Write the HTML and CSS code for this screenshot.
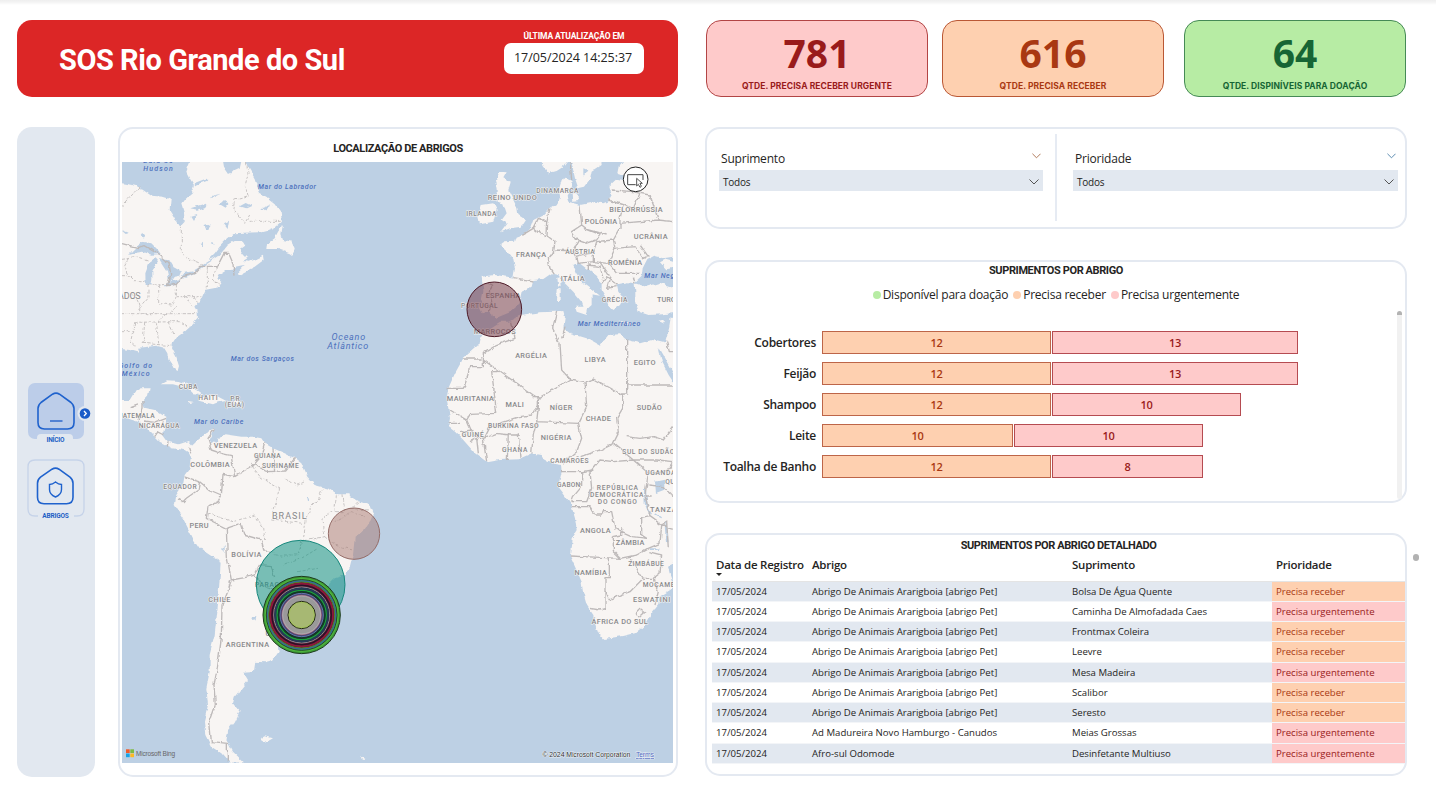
FILE: index.html
```html
<!DOCTYPE html>
<html lang="pt-BR">
<head>
<meta charset="utf-8">
<title>SOS Rio Grande do Sul</title>
<link rel="stylesheet" href="styles.css">
</head>
<body>
<div class="page">
  <header class="top">
    <div class="banner">
      <h1>SOS Rio Grande do Sul</h1>
      <div class="updated"><span class="updated-label">ÚLTIMA ATUALIZAÇÃO EM</span><span class="updated-value">17/05/2024 14:25:37</span></div>
    </div>
    <div class="kpi red"><b>781</b><span>QTDE. PRECISA RECEBER URGENTE</span></div>
    <div class="kpi orange"><b>616</b><span>QTDE. PRECISA RECEBER</span></div>
    <div class="kpi green"><b>64</b><span>QTDE. DISPINÍVEIS PARA DOAÇÃO</span></div>
  </header>
  <main class="main">
    <nav class="side">
      <svg class="nav" viewBox="0 0 78 150" width="78" height="150" fill="none">
        <rect x="11" y="6" width="56" height="56" rx="7" fill="#bccde9"/>
        <path d="M20 66v-5q0-4 4-4h28q4 0 4 4v5z" fill="#e2e8f0"/>
        <path d="M35.500 17.200q3.500-2.200 7 0l11.500 8.300q3 2.500 3 6v14q0 6.500-6.500 6.500h-23q-6.500 0-6.500-6.500v-14q0-3.500 3-6z" stroke="#1f62cd" stroke-width="1.600"/>
        <path d="M33 44h12.500" stroke="#3f74cf" stroke-width="1.700"/>
        <circle cx="68" cy="36.500" r="7.500" fill="#e2e8f0"/><circle cx="68" cy="36.500" r="5.300" fill="#1b5cc8"/>
        <path d="m67 34 2.300 2.500L67 39" stroke="#fff" stroke-width="1.300"/>
        <text x="38.500" y="64.500" textLength="18">INÍCIO</text>
        <path d="M21 139h-3q-7 0-7-7V90q0-7 7-7h42q7 0 7 7v42q0 7-7 7h-3" stroke="#c6d3e9" stroke-width="1.300"/>
        <path d="M35 92.200q3.500-2.200 7 0l11 8q3 2.500 3 6v14q0 6.500-6.500 6.500h-22.500q-6.500 0-6.500-6.500v-14q0-3.500 3-6z" stroke="#1f62cd" stroke-width="1.600"/>
        <path d="M38.500 105q3 2.500 6 2.500v5q0 5-6 7.500-6-2.500-6-7.500v-5q3 0 6-2.500z" stroke="#1f62cd" stroke-width="1.400"/>
        <text x="38.500" y="141" textLength="26.500">ABRIGOS</text>
      </svg>
    </nav>
    <section class="card map-card">
      <h2>LOCALIZAÇÃO DE ABRIGOS</h2>
      <svg class="map" viewBox="122 162 551 601" width="551" height="601">
        <defs><filter id="coast" x="0" y="0" width="1" height="1"><feTurbulence type="fractalNoise" baseFrequency=".13" numOctaves="3" seed="8"/><feDisplacementMap in="SourceGraphic" scale="4.500" xChannelSelector="R" yChannelSelector="G"/></filter></defs>
        <rect x="122" y="162" width="551" height="601" fill="#bdd0e4"/>
        <g filter="url(#coast)"><rect x="100" y="140" width="600" height="650" fill="#bdd0e4"/>
        <!-- Americas -->
        <g transform="translate(118 125) scale(.33333)">
          <g class="land">
            <path d="M-20 170 12 175 55 182 75 195 100 212 135 215 158 222 155 255 168 275 180 300 188 303 200 290 198 265 190 238 205 220 222 205 228 180 215 160 205 140 215 115 225 80 310 80 318 125 335 150 350 135 365 128 376 80 392 130 410 160 418 185 425 205 445 215 470 235 488 260 492 290 475 305 445 318 430 322 375 323 350 325 330 340 305 365 290 385 272 403 305 390 330 360 350 348 375 348 382 360 365 372 378 390 388 400 375 408 395 410 420 400 435 392 437 405 410 425 380 440 362 450 360 440 380 420 355 425 340 435 325 435 305 448 298 460 310 475 305 487 290 490 262 495 255 510 248 525 232 545 238 555 240 580 225 598 200 620 178 635 165 655 162 670 175 695 183 720 178 738 168 730 152 705 148 685 138 668 115 662 90 665 60 668 65 680 35 672-20 665z"/>
            <path d="m495 300-15 20-10 20-20 15-2 17 32 0 35 13 10 7 5-22-10-20-25-5-5-15z"/>
            <path d="M-20 825H35L50 800 65 790H95L90 812 72 830 80 848 110 855 142 875 140 905 135 930 150 950 180 958 210 948 225 965 222 990 200 975 165 970 125 950 85 910 60 890 12 875-20 860z"/>
            <path d="m128 778 22-12 35 2 30 12 30 20 10 8-30-3-15-15-45-12zM240 822l22-12 33 2 30 16-25 4-15 6-40-10zM345 828h25v6h-25zM205 830l23 4-12 3z"/>
            <path d="M210 985 222 962 240 945 265 925 290 912 285 925 275 945 280 955 300 940 320 928 370 935 405 935 430 940 440 955 465 970 500 985 530 1000 550 1015 568 1055 590 1080 635 1092 660 1108 690 1108 725 1130 755 1140 765 1165 755 1190 735 1220 710 1240 708 1260 705 1290 695 1330 680 1350 650 1360 635 1375 610 1410 590 1445 570 1475 540 1500 500 1520 478 1550 482 1580 465 1605 440 1612 412 1610 408 1638 375 1640 390 1665 370 1690 350 1715 345 1735 365 1760 350 1790 330 1815 325 1845 345 1880 378 1912 335 1913 310 1885 280 1865 262 1830 258 1790 270 1740 265 1690 275 1640 275 1590 290 1530 300 1440 308 1310 290 1300 245 1270 225 1240 195 1180 170 1140 175 1110 195 1080 200 1050 215 1030 218 1000z"/>
            <path d="m428 1840 12-6 22 6-18 10zM722 1890l20 8-4 6z"/>
          </g>
          <g fill="#bdd0e4">
            <path d="m30 390 20-20 25-20 25 5 20 20 8 12-28 2-25-9-20 3zM83 480l-1-35 13-35 15-10 10 12-17 25 0 23-3 20zM122 400l30 2 15 25 25 13-5 12-20 4-12 18-8-35zM138 484l22-16 27-6 3 5-27 17zM190 455l10-12 25-4 6 7-26 12zM230 435l40-25 30-20 3 3-33 22-38 26z"/>
            <path d="m228 175 35-14 5 6-36 14zM217 250l45-14 6 6-30 12zM305 238l13-13 15 10-10 13zM365 244l18-10 18 8-16 8zM12 315l20 8-6 4zM68 330l6-8 8 10-6 8zM260 300l15-5-10 25zM318 295l15-8-4 22zM430 250l35-14-27 20zM280 220l28-14-25 6zM220 275l18-5-10 18zM245 355l10-8 0 14zM278 355l8-4 4 8zM396 1480l16-4-2 10-10 2zM312 1268l8-4 0 18zM397 335l18 12-35-15zM288 935l8 0 2 18-9-2zM568 1118l8 2-6 8z"/>
          </g>
          <g class="border">
            <path d="M12 356 60 368 78 362 125 390 153 413 158 450 148 482 175 478 195 455 230 445 248 424H298L318 385H332L345 415 348 452M75 828V850L60 885M38 848 60 840M75 888 110 892 142 880M110 935 120 920 140 930M148 965 150 950M212 965 218 985M290 912 270 940 280 975 310 985 340 992 345 1025 350 1055 315 1048 310 1110 275 1095 245 1070 200 1055M245 1070 240 1095 205 1120 195 1130 180 1122M310 1110 300 1130 270 1145 265 1180 305 1200 325 1210 370 1195 380 1230 430 1245 437 1278 470 1280M325 1210 328 1300 340 1365 380 1358 410 1350 425 1322 460 1325 470 1355M410 1350 440 1385 480 1400M340 1365 330 1395 312 1440 310 1540 298 1630 288 1680 292 1740 275 1790 280 1850 328 1855V1910M440 955 430 990 400 1025 350 1055M400 1015 450 1040 500 1038 530 1000M465 970 470 1040"/>
          </g>
          <g class="state"><path d="M12 245 66 182M190 300V385L225 408 255 420M385 111 390 145 382 180 390 215 350 225 345 250 380 295 395 270M395 289H490M12 452H35L50 467H88M30 400 20 420 35 455M25 500 50 510 65 540 65 565M12 566H235M12 620H45M90 480V520L60 555M122 480V535M90 480 165 478M175 475V515H250M175 515 160 540 120 535M268 425V490M300 425 280 465 305 480M50 592 185 590 215 605M80 592 75 655M115 592 122 655M150 590 165 625M75 655 160 662M50 592 38 650 55 665M200 515 225 545M225 515 240 530M120 590 180 540M12 400 50 395 95 410M270 1165 345 1190 410 1170 437 1210 440 1245M485 1090 460 1185 555 1195M485 1090 430 1060 400 1020M555 1250 565 1180 580 1145 600 1125 615 1090M545 1250 620 1235 615 1180 640 1160M655 1108 650 1160 680 1160 675 1108M720 1130 700 1150 750 1155M470 1290 540 1290 555 1250M500 1320 550 1300 600 1270M540 1340 600 1330M620 1235 650 1260 700 1275M650 1190 700 1160 740 1175M500 1060 540 1080 560 1070"/></g>
        </g>
        <!-- Europe and Africa -->
        <g transform="translate(400 125) scale(.33333)">
          <g class="land">
            <path d="M245 455 285 450 340 458 345 430 340 405 325 385 300 360 310 352 345 350 350 335 370 328 390 312 400 285 430 270 450 250 475 235 480 215 478 190 485 165 500 158 515 165 512 190 500 215 505 230 540 240 590 230 610 235 625 228 635 210 628 185 650 165 690 170 680 150 655 145 660 120 690 80H850V395H819L790 400 760 392 742 402 728 430 725 455 705 475 680 472 650 478 655 500 670 520 660 540 640 555 630 545 620 520 605 495 605 475 590 455 565 435 535 412 520 420 530 445 550 475 585 500 600 512 575 508 575 540 555 558 545 530 520 500 490 470 475 450 455 445 430 462 400 465 395 485 365 500 355 540 330 562 290 578 275 570 265 560 248 565 240 550 250 500z"/>
            <path d="m425 80 5 45 15 20 25-7 20-13 15-20 10 10 10 45 10 30 20-5 15-20 5-25 30-20-5-45zM515 205l15 0 5 20-18 3zM300 140l20 2-10 18 22 12-7 23 15 30 12 25 3 20 23 15-13 20-35 5-30 12 20-27-15-10 15-20-10-30-20-5 0-35-5-30zM245 240l35-5 10 20-10 35-40 8-5-23zM470 490h12v35h-14zM472 460l8-4 2 28-8-3zM525 545h40l-5 25-30-10zM655 588l40 4-10 6zM775 588l22-6-8 12zM780 412l20-10 19 5v22l-20 4z"/>
            <path d="m850 490-31-5-40-12-40 12-35-10 2 25 0 30 10 30 30 10 44-2 60-8z"/>
            <path d="M300 590 330 590 360 570 420 562 465 560 490 558 495 575 490 610 510 625 560 640 600 662 625 630 660 628 680 645 720 655 755 645 795 655 805 620 812 580 850 560V1300L805 1325 812 1355 819 1390 778 1415 775 1440 755 1465 735 1500 705 1525 670 1533 610 1542 595 1525 588 1505 580 1470 560 1440 550 1405 545 1370 525 1325 510 1293 515 1240 530 1215 525 1180 512 1135 490 1105 475 1085 485 1040 483 1017 440 1010 425 990 395 985 355 1003 300 1005 262 1012 225 985 190 945 165 920 145 905 150 880 145 850 140 820 145 790 165 745 190 700 235 660 240 635 270 610z"/>
          </g>
          <g fill="#bdd0e4"><path d="m776 665 20 35 30 55v25l-20-30-20-40zM765 1070l28-6 0 30-25 10zM732 1095l6 0 6 50 12 22-8 4-14-35zM793 1192l8 5 5 55-8 0zM750 1270h28v5h-28zM550 130l12 5-12 20zM765 1165l18 12-2 3-18-10zM850 1310 805 1325 812 1355 821 1388 850 1380z"/></g>
          <g class="border"><path d="M265 475 278 480 268 500 275 530 262 565M340 458 400 468M450 250 440 290 438 330 465 350 460 380 445 400 450 430 460 445M370 328 400 310 435 335M400 310 415 280 440 290M540 240 545 300 515 320 530 345 560 355 590 345 600 330 550 310M515 320 535 350 520 375 525 395 580 380 590 350 640 345 660 310 660 280 670 240 625 225M445 400 470 375 520 378M530 395 535 415 580 410 580 385M635 195 700 200 720 205 700 250 670 240M720 205 750 210 775 285 660 295M775 285 819 290M640 345 645 370 625 415 580 410M645 370 705 365 730 400 740 395M625 415 650 445 720 445M605 475 620 455 650 478M565 435 565 420 600 425 610 460M600 410 630 455 620 490 650 485M705 475 700 455M545 300 565 315 620 330M720 360 745 395M690 170 700 200M510 111 515 165"/>
            <path d="M335 590 345 640 290 660 250 685 250 725H208L205 745 190 790H143M250 705 400 810 415 820 510 762 485 735 480 655 458 610 470 560M400 810V815H415V845L395 870 360 875 300 895 265 910 250 940M275 740 290 865 210 868 200 885 150 855M275 740H295M415 845 410 890 400 930M410 890 535 895 560 845 555 770 510 762M485 640 495 605M555 770 580 762 665 810H680V640M680 780H819M668 810V850L650 880 655 925 640 955 600 975 545 995M535 895 545 940 530 980 490 1015M680 935 720 940 760 935 790 945 819 905M640 955 700 1005 770 1005 819 1010M200 885 220 930 250 940 290 925 330 930 360 930M325 925 322 1005M355 925 360 1000M400 930 395 985M250 940 260 1010M145 895 180 895M180 920 215 915M210 950 230 940 235 985M483 1040H545V1085L520 1115 515 1130M570 1040 575 1090 560 1130 515 1130M545 1040 575 1035 600 1005 640 1010 700 1005 745 1045 735 1110 750 1175 725 1180 725 1230 740 1240 700 1235 645 1210 635 1160 610 1160 605 1170H585L570 1145H515M510 1293 600 1297 660 1300 710 1290 745 1270 780 1255 785 1200 750 1175M640 1235V1280L660 1300M640 1235 665 1230V1210M628 1300V1358H615V1450L600 1455 570 1450M628 1425 650 1415 690 1400 730 1360 760 1360 780 1345 785 1290 745 1280M690 1300 730 1360M615 1400 628 1425M760 1360 775 1400 765 1440M745 1080 790 1085 819 1115M745 1045 800 1040 819 1015M785 1200 800 1190 805 1270M735 1110H755M819 1210 785 1200M705 1465 720 1450 735 1462 715 1480zM190 702 245 702M800 650 808 680H819M565 1040 580 1035"/></g>
        </g></g>
        <!-- Place names -->
        <g transform="translate(118 125) scale(.33333)">
          <g class="sea"><text x="120" y="113" textLength="88">Baía de</text><text x="120" y="137" textLength="88">Hudson</text><text x="507" y="192" textLength="174">Mar do Labrador</text><text x="433" y="708" textLength="190">Mar dos Sargaços</text><text x="302" y="897" textLength="148">Mar do Caribe</text><text x="52" y="728" textLength="100">Golfo do</text><text x="53" y="753" textLength="84">México</text><text class="big" x="691" y="644" textLength="101">Oceano</text><text class="big" x="689" y="672" textLength="123">Atlântico</text></g>
          <g class="place"><text class="big" x="12" y="521" textLength="112">ESTADOS</text><text class="s" x="210" y="792" textLength="56">CUBA</text><text class="s" x="270" y="825" textLength="58">HAITI</text><text class="s" x="351" y="828" textLength="28">PR</text><text class="s" x="349" y="847" textLength="58">(EUA)</text><text class="s" x="48" y="879" textLength="124">GUATEMALA</text><text class="s" x="123" y="909" textLength="122">NICARÁGUA</text><text x="352" y="968" textLength="130">VENEZUELA</text><text class="s" x="448" y="998" textLength="80">GUIANA</text><text class="s" x="487" y="1030" textLength="110">SURINAME</text><text x="276" y="1026" textLength="118">COLÔMBIA</text><text class="s" x="186" y="1093" textLength="100">EQUADOR</text><text x="243" y="1210" textLength="57">PERU</text><text class="big" x="514" y="1182" textLength="104">BRASIL</text><text x="385" y="1296" textLength="90">BOLÍVIA</text><text class="s" x="466" y="1386" textLength="110">PARAGUAI</text><text x="304" y="1430" textLength="66">CHILE</text><text x="388" y="1565" textLength="130">ARGENTINA</text><text x="500" y="1533" textLength="115">URUGUAI</text></g>
        </g>
        <g transform="translate(400 125) scale(.33333)">
          <g class="sea"><text x="789" y="460" textLength="112">Mar Negro</text><text x="627" y="603" textLength="188">Mar Mediterrâneo</text></g>
          <g class="place"><text x="337" y="226" textLength="147">REINO UNIDO</text><text class="s" x="472" y="204" textLength="127">DINAMARCA</text><text class="s" x="244" y="272" textLength="90">IRLANDA</text><text x="708" y="262" textLength="160">BIELORRÚSSIA</text><text x="603" y="298" textLength="97">POLÔNIA</text><text x="752" y="342" textLength="101">UCRÂNIA</text><text x="393" y="397" textLength="90">FRANÇA</text><text class="s" x="540" y="388" textLength="88">ÁUSTRIA</text><text x="675" y="420" textLength="102">ROMÊNIA</text><text x="518" y="468" textLength="72">ITÁLIA</text><text class="s" x="644" y="532" textLength="77">GRÉCIA</text><text x="817" y="531" textLength="92">TURQUIA</text><text x="309" y="518" textLength="104">ESPANHA</text><text class="s" x="238" y="550" textLength="110">PORTUGAL</text><text x="284" y="627" textLength="126">MARROCOS</text><text x="393" y="698" textLength="95">ARGÉLIA</text><text x="585" y="711" textLength="63">LIBYA</text><text x="734" y="720" textLength="66">EGITO</text><text x="211" y="828" textLength="141">MAURITANIA</text><text x="344" y="846" textLength="55">MALI</text><text x="483" y="855" textLength="68">NÍGER</text><text x="595" y="887" textLength="76">CHADE</text><text x="748" y="855" textLength="75">SUDÃO</text><text class="s" x="340" y="909" textLength="152">BURKINA FASO</text><text class="s" x="218" y="936" textLength="66">GUINÉ</text><text x="468" y="945" textLength="92">NIGÉRIA</text><text class="s" x="344" y="982" textLength="76">GHANA</text><text class="s" x="745" y="986" textLength="156">SUL DO SUDÃO</text><text class="s" x="508" y="1013" textLength="115">CAMARÕES</text><text class="s" x="781" y="1049" textLength="90">UGANDA</text><text class="s" x="835" y="1076" textLength="78">QUÊNIA</text><text class="s" x="506" y="1085" textLength="70">GABON</text><text class="s" x="652" y="1094" textLength="124">REPÚBLICA</text><text class="s" x="650" y="1115" textLength="160">DEMOCRÁTICA</text><text class="s" x="652" y="1136" textLength="117">DO CONGO</text><text x="812" y="1160" textLength="124">TANZANIA</text><text x="586" y="1224" textLength="92">ANGOLA</text><text x="690" y="1260" textLength="86">ZÂMBIA</text><text class="s" x="738" y="1323" textLength="107">ZIMBÁBUE</text><text x="572" y="1350" textLength="97">NAMÍBIA</text><text class="s" x="802" y="1386" textLength="148">MOÇAMBIQUE</text><text x="755" y="1431" textLength="112">ESWATINI</text><text x="659" y="1498" textLength="169">ÁFRICA DO SUL</text></g>
          <circle cx="283" cy="553" r="82" fill="#7b4450" fill-opacity=".56" stroke="#4c1926" stroke-width="3"/>
          <circle cx="707" cy="163" r="37" fill="#fff" stroke="#222" stroke-width="3"/>
          <path d="M707 179H683V149H729V165" fill="none" stroke="#444" stroke-width="3"/><path d="M710 160V183L715 178 720 187 724 184 720 175H727z" fill="#fff" stroke="#333" stroke-width="2.500"/>
        </g>
        <!-- Shelter bubbles -->
        <g transform="translate(118 125) scale(.33333)" fill="none" stroke-width="3">
          <circle cx="708" cy="1226" r="77" fill="#a7786f" fill-opacity=".5" stroke="#946b67"/>
          <circle cx="548" cy="1379" r="133" fill="#0c9180" fill-opacity=".54" stroke="#16877b"/>
          <g transform="translate(551 1470)">
            <circle r="116" fill="#3e9c35" stroke="#1d381d"/><circle r="109" stroke="#4fb53e" stroke-width="4"/><circle r="106" stroke="#23472c"/><circle r="102" stroke="#3366a0" stroke-width="4"/><circle r="99" fill="#611630" stroke="#557f2d"/><circle r="94" stroke="#8e183a" stroke-width="5"/><circle r="89" stroke="#29112a" stroke-width="4"/><circle r="84" fill="#242337" stroke="#8b8b92"/><circle r="79" stroke="#243c59" stroke-width="5"/><circle r="74" stroke="#1aa23c" stroke-width="4"/><circle r="69" stroke="#103d24" stroke-width="5"/><circle r="65" fill="#444a70" stroke="#6772b1"/><circle r="59" fill="#9a999a" stroke="#b7527a" stroke-width="2"/><circle r="57" stroke="#b0acb0"/><circle r="41" fill="#a7b873" stroke="#222713"/><circle r="38" stroke="#9fc64b" stroke-width="2"/>
          </g>
        </g>
        <rect x="126" y="749.300" width="3.700" height="3.700" fill="#f15b2a"/><rect x="130.300" y="749.300" width="3.700" height="3.700" fill="#7eba42"/><rect x="126" y="753.500" width="3.700" height="3.700" fill="#17a4e8"/><rect x="130.300" y="753.500" width="3.700" height="3.700" fill="#fdb922"/>
        <text class="credit bing" x="136" y="755.500" textLength="39">Microsoft Bing</text>
        <text class="credit" x="542.500" y="757" textLength="88">© 2024 Microsoft Corporation</text>
        <text class="credit terms" x="636" y="757" textLength="18">Terms</text>
      </svg>
    </section>
    <div class="right">
      <section class="card filters">
        <div class="filter"><div class="filter-title">Suprimento<svg viewBox="0 0 10 6" width="9" height="6"><path d="m.5.500 4.500 4.500L9.500.500"/></svg></div><div class="select">Todos<svg viewBox="0 0 10 6" width="10" height="6"><path d="m.5.500 4.500 4.500L9.500.500"/></svg></div></div>
        <div class="filter"><div class="filter-title blue">Prioridade<svg viewBox="0 0 10 6" width="9" height="6"><path d="m.5.500 4.500 4.500L9.500.500"/></svg></div><div class="select">Todos<svg viewBox="0 0 10 6" width="10" height="6"><path d="m.5.500 4.500 4.500L9.500.500"/></svg></div></div>
      </section>
      <section class="card chart">
        <h2>SUPRIMENTOS POR ABRIGO</h2>
        <div class="legend"><span class="l1">Disponível para doação</span><span class="l2">Precisa receber</span><span class="l3">Precisa urgentemente</span></div>
        <div class="plot">
          <div class="bars">
            <div class="row"><label>Cobertores</label><i class="o" style="width:229px">12</i><i class="r" style="width:246px">13</i></div>
            <div class="row"><label>Feijão</label><i class="o" style="width:229px">12</i><i class="r" style="width:246px">13</i></div>
            <div class="row"><label>Shampoo</label><i class="o" style="width:229px">12</i><i class="r" style="width:189px">10</i></div>
            <div class="row"><label>Leite</label><i class="o" style="width:191px">10</i><i class="r" style="width:189px">10</i></div>
            <div class="row"><label>Toalha de Banho</label><i class="o" style="width:229px">12</i><i class="r" style="width:151px">8</i></div>
          </div>
          <div class="scroll"></div>
        </div>
      </section>
      <section class="card detail">
        <h2>SUPRIMENTOS POR ABRIGO DETALHADO</h2>
        <table>
          <thead><tr><th class="sorted">Data de Registro</th><th>Abrigo</th><th>Suprimento</th><th>Prioridade</th></tr></thead>
          <tbody>
            <tr><td>17/05/2024</td><td>Abrigo De Animais Ararigboia [abrigo Pet]</td><td>Bolsa De Água Quente</td><td class="o">Precisa receber</td></tr>
            <tr><td>17/05/2024</td><td>Abrigo De Animais Ararigboia [abrigo Pet]</td><td>Caminha De Almofadada Caes</td><td class="r">Precisa urgentemente</td></tr>
            <tr><td>17/05/2024</td><td>Abrigo De Animais Ararigboia [abrigo Pet]</td><td>Frontmax Coleira</td><td class="o">Precisa receber</td></tr>
            <tr><td>17/05/2024</td><td>Abrigo De Animais Ararigboia [abrigo Pet]</td><td>Leevre</td><td class="o">Precisa receber</td></tr>
            <tr><td>17/05/2024</td><td>Abrigo De Animais Ararigboia [abrigo Pet]</td><td>Mesa Madeira</td><td class="r">Precisa urgentemente</td></tr>
            <tr><td>17/05/2024</td><td>Abrigo De Animais Ararigboia [abrigo Pet]</td><td>Scalibor</td><td class="o">Precisa receber</td></tr>
            <tr><td>17/05/2024</td><td>Abrigo De Animais Ararigboia [abrigo Pet]</td><td>Seresto</td><td class="o">Precisa receber</td></tr>
            <tr><td>17/05/2024</td><td>Ad Madureira Novo Hamburgo - Canudos</td><td>Meias Grossas</td><td class="r">Precisa urgentemente</td></tr>
            <tr><td>17/05/2024</td><td>Afro-sul Odomode</td><td>Desinfetante Multiuso</td><td class="r">Precisa urgentemente</td></tr>
          </tbody>
        </table>
        <span class="scroll-dot"></span>
      </section>
    </div>
  </main>
</div>
</body>
</html>
```
FILE: styles.css
```css
* { box-sizing: border-box; }
body { margin: 0; background: #fff; color: #252423; font-family: "Open Sans", "Noto Sans", sans-serif; overflow: hidden; }
.page { width: 1436px; height: 806px; padding: 20px 30px 30px 17px; background: linear-gradient(#eee, #f3f3f3 2px, #fff 5px); }
.top { display: grid; grid-template-columns: 661px 222px 222px 222px; grid-template-rows: 77px; height: 77px; }
.banner { display: flex; justify-content: space-between; padding: 0 34px 0 42px; border-radius: 15px; background: #dc2626; color: #fff; }
h1 { margin: 0; font: bold 29px/80px Roboto, sans-serif; height: 77px; letter-spacing: -.45px; white-space: nowrap; }
.updated { display: flex; flex-direction: column; align-items: center; width: 140px; padding-top: 10px; }
.updated-label { font: bold 8.500px/13px Roboto, sans-serif; letter-spacing: -.12px; white-space: nowrap; }
.updated-value { width: 140px; height: 31px; border-radius: 7px; background: #fff; color: #252423; font-size: 12.500px; line-height: 29px; padding-left: 10px; letter-spacing: -.05px; white-space: nowrap; }
.kpi { display: flex; flex-direction: column; align-items: center; border: 1px solid; border-radius: 15px; }
.kpi b { font-size: 39px; line-height: 63px; height: 58px; }
.kpi span { font: bold 8.500px/15px Inter, sans-serif; letter-spacing: .08px; white-space: nowrap; }
.kpi.red { margin-left: 28px; margin-right: -28px; background: #fecaca; color: #991b1b; border-color: #b24545; }
.kpi.orange { margin-left: 42px; margin-right: -42px; background: #fed0b0; color: #a93812; border-color: #ba5835; }
.kpi.green { margin-left: 62px; margin-right: -62px; background: #b7eca4; color: #166534; border-color: #458a56; }
.main { display: grid; grid-template-columns: 78px 560px 700px; height: 650px; margin-top: 30px; }
.map-card { margin-left: 23px; margin-right: -23px; }
.right { margin-left: 50px; margin-right: -51px; display: grid; grid-template-rows: 102px 243px 243px; row-gap: 31px; }
.side { border-radius: 15px; background: #e2e8f0; padding-top: 250px; }
.nav { display: block; }
.nav text { font: bold 6.500px Roboto, sans-serif; fill: #1f5fc5; text-anchor: middle; }
.card { border: 2px solid #e4e9f1; border-radius: 15px; background: #fff; }
h2 { margin: 0; text-align: center; font: bold 11px/16px Roboto, sans-serif; letter-spacing: -.4px; color: #252423; }
.map-card h2 { padding-top: 12px; height: 33px; }
.map { display: block; margin-left: 2px; overflow: hidden; }
.land { fill: #f8f5f3; }
.border, .state { fill: none; stroke: #bdb9b9; stroke-width: 4; stroke-linejoin: round; }
.state { stroke-width: 2.500; stroke-dasharray: 9 5; }
.place, .sea { text-anchor: middle; font-family: Roboto, sans-serif; paint-order: stroke; }
.place { font-size: 22px; font-weight: 500; fill: #88898b; stroke: #f8f5f3; stroke-width: 3px; }
.place .s { font-size: 20px; }
.place .big { font-size: 27px; font-weight: 400; }
.sea { font-size: 21px; font-style: italic; font-weight: 500; fill: #4d70bd; }
.sea .big { font-size: 27px; font-weight: 400; }
.credit { font: 7px "Liberation Sans", sans-serif; fill: #333; paint-order: stroke; stroke: #e8eef4; stroke-width: 1px; }
.bing { font-size: 6.500px; fill: #666; stroke: none; }
.terms { fill: #5368c0; text-decoration: underline; }
.filters { display: grid; grid-template-columns: 349px 1fr; padding: 5px 7px 6px 12px; }
.filter { padding-top: 13px; }
.filter + .filter { border-left: 2px solid #e6ebf3; padding-left: 16px; margin-left: -13px; }
.filter:first-child { padding-right: 25px; }
.filter-title { display: flex; justify-content: space-between; align-items: center; height: 22px; padding: 0 2px; font-size: 12px; letter-spacing: -.2px; }
.filter svg { fill: none; stroke: #555; stroke-width: 1; }
.filter .filter-title svg { stroke: #a96c4a; margin-top: -4px; }
.filter .blue svg { stroke: #4c80a8; }
.select { display: flex; justify-content: space-between; align-items: center; height: 21px; margin-top: 1px; padding: 2px 4px 0; background: #e2e8f0; font-size: 10px; letter-spacing: -.25px; }
.chart h2 { line-height: 18px; }
.legend { display: flex; justify-content: center; gap: 5px; height: 28px; align-items: center; font-size: 12px; letter-spacing: -.24px; white-space: nowrap; }
.legend span::before { content: ""; display: inline-block; width: 8px; height: 8px; margin-right: 2px; border-radius: 50%; background: #b7eca4; }
.legend .l2::before { background: #fed0b0; }
.legend .l3::before { background: #fecaca; }
.plot { display: flex; justify-content: space-between; }
.bars { display: grid; grid-auto-rows: 23px; row-gap: 8.200px; padding-top: 22.500px; }
.row { display: flex; }
.row label { width: 109px; margin-right: 6px; text-align: right; font-size: 12px; font-weight: 600; line-height: 23px; letter-spacing: -.28px; white-space: nowrap; }
.row i { border: 1px solid #bd6548; margin-right: 1px; background: #fed0b0; color: #a93812; text-align: center; font: 600 11px/21px "Open Sans", sans-serif; letter-spacing: -.3px; }
.row i.r { border-color: #b54b51; background: #fecaca; color: #991b1b; }
.scroll { width: 5px; height: 188px; margin: 3px 3px 0 0; border-radius: 3px; background: linear-gradient(#b3b3b3 4px, #f1f1f1 4px); }
.detail { position: relative; padding-left: 5px; margin-top: -1px; margin-bottom: 1px; }
.detail h2 { line-height: 22px; }
table { width: 693px; border-collapse: collapse; table-layout: fixed; font-size: 9.600px; }
th, td { padding: 0 0 0 4px; text-align: left; white-space: nowrap; }
th { height: 24px; font-size: 11.500px; font-weight: 600; letter-spacing: -.25px; line-height: 16px; vertical-align: top; }
th:nth-child(1) { width: 96px; }
th:nth-child(2) { width: 260px; }
th:nth-child(3) { width: 204px; }
.sorted::after { content: ""; display: block; width: 0; border: 3.500px solid transparent; border-top-color: #252423; border-bottom: 0; }
td { height: 20.250px; line-height: 19px; border-bottom: 1px solid #f3f5f8; }
tbody tr:first-child td { border-top: 1px solid #e4e4e4; }
tbody tr:nth-child(odd) { background: #e2e8f0; }
td.o { background: #fed0b0; color: #a93812; }
td.r { background: #fecaca; color: #991b1b; }
.scroll-dot { position: absolute; top: 19px; right: -14px; width: 6px; height: 7px; border-radius: 3px; background: #b2b2b2; }
```
